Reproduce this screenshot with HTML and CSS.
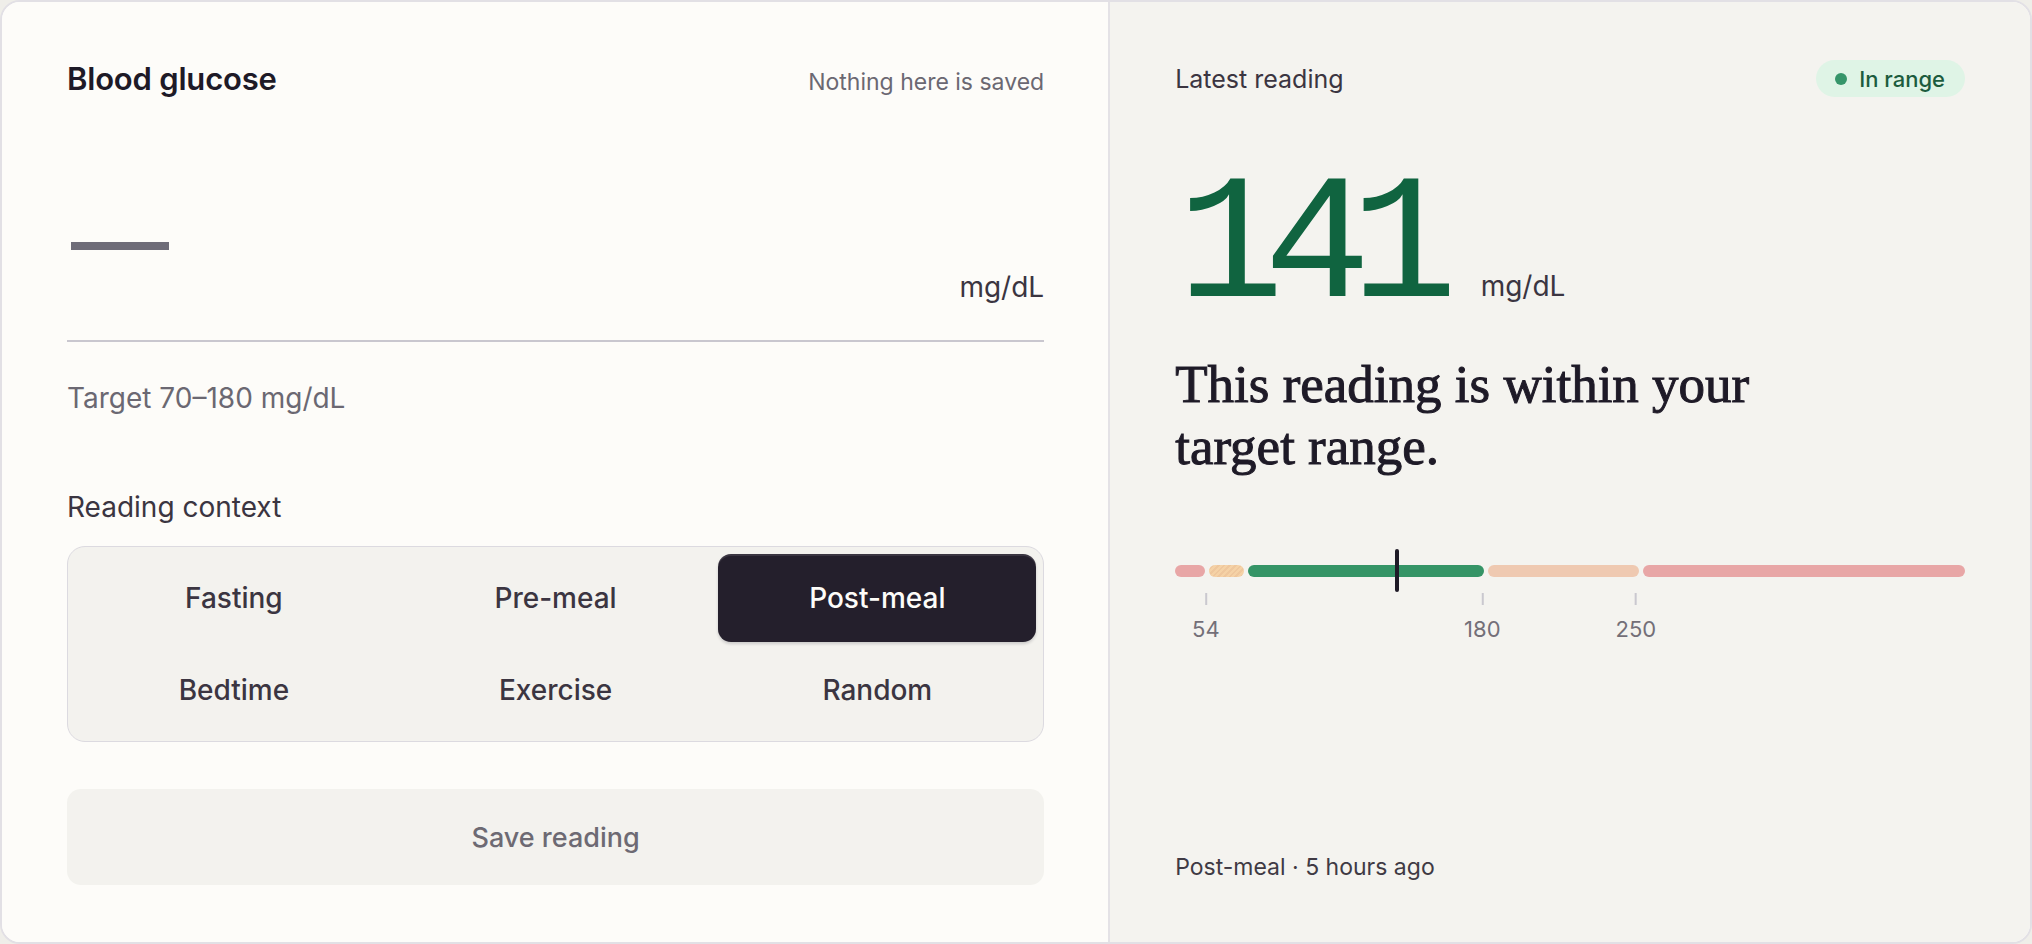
FILE: index.html
```html
<!DOCTYPE html>
<html lang="en">
<head>
<meta charset="utf-8">
<title>Blood glucose</title>
<link rel="stylesheet" href="styles.css">
</head>
<body>
<div class="card">
  <section class="entry-panel">
    <header class="panel-head">
      <h1 class="title">Blood glucose</h1>
      <span class="note">Nothing here is saved</span>
    </header>
    <div class="entry">
      <span class="entry-value">—</span>
      <span class="entry-unit">mg/dL</span>
    </div>
    <p class="target">Target 70–180 mg/dL</p>
    <p class="field-label">Reading context</p>
    <div class="segmented">
      <button class="seg">Fasting</button>
      <button class="seg">Pre-meal</button>
      <button class="seg seg-active">Post-meal</button>
      <button class="seg">Bedtime</button>
      <button class="seg">Exercise</button>
      <button class="seg">Random</button>
    </div>
    <button class="save">Save reading</button>
  </section>
  <section class="result-panel">
    <header class="result-head">
      <span class="eyebrow">Latest reading</span>
      <span class="badge"><span class="dot"></span>In range</span>
    </header>
    <div class="value-row">
      <span class="value">141</span>
      <span class="value-unit">mg/dL</span>
    </div>
    <h2 class="verdict">This reading is within your target range.</h2>
    <div class="scale">
      <div class="bar">
        <span class="band band-vlow" style="flex-grow:14"></span>
        <span class="band band-low" style="flex-grow:16"></span>
        <span class="band band-ok" style="flex-grow:110"></span>
        <span class="band band-high" style="flex-grow:70"></span>
        <span class="band band-vhigh" style="flex-grow:150"></span>
      </div>
      <span class="marker" style="left:28.06%"></span>
      <div class="ticks">
        <span class="tick" style="left:3.89%"><span class="tick-line"></span><span class="tick-label">54</span></span>
        <span class="tick" style="left:38.89%"><span class="tick-line"></span><span class="tick-label">180</span></span>
        <span class="tick" style="left:58.33%"><span class="tick-line"></span><span class="tick-label">250</span></span>
      </div>
    </div>
    <p class="meta">Post-meal · 5 hours ago</p>
  </section>
</div>
</body>
</html>
```

FILE: styles.css
```css
* { box-sizing: border-box; }

html, body {
  margin: 0;
  padding: 0;
  background: #efeee9;
}

body {
  font-family: Inter, "Noto Sans", sans-serif;
  color: #1e1a27;
}

.card {
  width: 2032px;
  height: 944px;
  border: 2px solid #e2e0e5;
  border-radius: 20px;
  overflow: hidden;
  display: grid;
  grid-template-columns: 1.2fr 1fr;
  background: #fdfcf9;
}

/* ---------- left panel ---------- */
.entry-panel {
  display: flex;
  flex-direction: column;
  padding: 59px 64px 56px 65px;
  background: #fdfcf9;
}

.panel-head {
  display: flex;
  justify-content: space-between;
  align-items: baseline;
}

.title {
  margin: 0;
  font-size: 31px;
  line-height: 36px;
  font-weight: 600;
  letter-spacing: -0.2px;
  color: #1e1a27;
}

.note {
  font-size: 23px;
  line-height: 28px;
  color: #6b6872;
}

.entry {
  display: flex;
  justify-content: space-between;
  align-items: flex-end;
  margin-top: 95px;
  padding-bottom: 36px;
  border-bottom: 2px solid #c9c7cf;
}

.entry-value {
  font-size: 98px;
  line-height: 98px;
  font-weight: 400;
  color: #6e6c78;
  margin-left: 4px;
  margin-bottom: 14px;
}

.entry-unit {
  font-size: 28px;
  line-height: 29px;
  color: #3b3541;
  margin-bottom: 2px;
}

.target {
  margin: 39px 0 0;
  font-size: 28px;
  line-height: 34px;
  color: #6b6872;
}

.field-label {
  margin: 75px 0 0;
  font-size: 28px;
  line-height: 34px;
  color: #3b3541;
}

.segmented {
  margin-top: 22px;
  display: grid;
  grid-template-columns: repeat(3, 1fr);
  gap: 4px;
  padding: 7px;
  border: 1px solid #dcdae0;
  border-radius: 18px;
  background: #f3f2ee;
}

.seg {
  height: 88px;
  border: none;
  border-radius: 13px;
  background: transparent;
  font-family: inherit;
  font-size: 28px;
  font-weight: 500;
  color: #3b3541;
  padding: 0;
}

.seg-active {
  background: #241f2c;
  color: #fdfcf9;
  box-shadow: 0 2px 3px rgba(30, 26, 39, 0.18), inset 0 2px 0 rgba(255, 255, 255, 0.1);
}

.save {
  margin-top: 47px;
  height: 96px;
  border: none;
  border-radius: 14px;
  background: #f3f2ee;
  font-family: inherit;
  font-size: 27px;
  font-weight: 500;
  color: #6d6a73;
}

/* ---------- right panel ---------- */
.result-panel {
  display: flex;
  flex-direction: column;
  padding: 58px 65px 59px 65px;
  background: #f4f3ef;
  border-left: 2px solid #e4e2e6;
}

.result-head {
  display: flex;
  justify-content: space-between;
  align-items: center;
}

.eyebrow {
  font-size: 25px;
  line-height: 30px;
  color: #3b3541;
}

.badge {
  display: inline-flex;
  align-items: center;
  gap: 12px;
  height: 37px;
  padding: 0 20px 0 19px;
  border-radius: 999px;
  background: #dff4e6;
  color: #1c5c3e;
  font-size: 22px;
  font-weight: 500;
}

.dot {
  width: 12px;
  height: 12px;
  border-radius: 50%;
  background: #36956a;
}

.value-row {
  display: flex;
  align-items: baseline;
  margin-top: 63px;
}

.value {
  font-family: "Liberation Mono", "DejaVu Sans Mono", monospace;
  font-size: 178px;
  line-height: 178px;
  letter-spacing: -20px;
  color: #106440;
  margin-left: 2px;
}

.value-unit {
  margin-left: 43px;
  font-size: 28px;
  color: #3b3541;
}

.verdict {
  margin: 15px 0 0;
  max-width: 640px;
  font-family: "Liberation Serif", "DejaVu Serif", serif;
  font-size: 53px;
  line-height: 62px;
  font-weight: 400;
  -webkit-text-stroke: 1px #1e1a27;
  color: #1e1a27;
}

.scale {
  position: relative;
  margin-top: 88px;
}

.bar {
  display: flex;
  gap: 4px;
  height: 12px;
}

.band {
  flex-basis: 0;
  border-radius: 6px;
}

.band-vlow { background: #e8a6a6; }
.band-low {
  background: repeating-linear-gradient(135deg, #f5d2a6 0 2px, #efc79d 2px 4px);
}
.band-ok { background: #359466; }
.band-high { background: #efc9b1; }
.band-vhigh { background: #e8a6a6; }

.marker {
  position: absolute;
  top: -16px;
  width: 4px;
  height: 43px;
  margin-left: -2px;
  border-radius: 2px;
  background: #1e1a26;
}

.ticks {
  position: relative;
  height: 60px;
  margin-top: 16px;
}

.tick {
  position: absolute;
  top: 0;
  display: flex;
  flex-direction: column;
  align-items: center;
  transform: translateX(-50%);
}

.tick-line {
  width: 2px;
  height: 12px;
  background: #cac8cf;
}

.tick-label {
  margin-top: 11px;
  font-size: 22px;
  line-height: 26px;
  color: #736f78;
}

.meta {
  margin: auto 0 0;
  font-size: 23px;
  line-height: 32px;
  color: #3f3a44;
}
```
